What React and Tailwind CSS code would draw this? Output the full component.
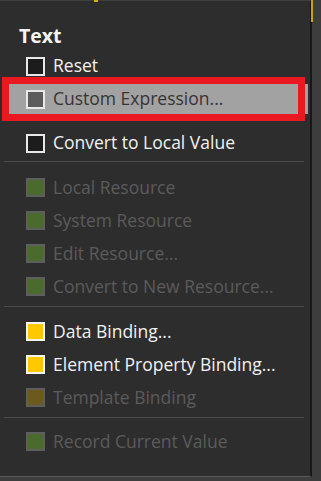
import React from "react"

const font = { fontFamily: '"Open Sans", "Noto Sans", "Liberation Sans", sans-serif' }

function Box({ kind }) {
  const cls =
    kind === "empty"
      ? "bg-[#1c1c1c] border-[#e8e8e8]"
      : kind === "gray"
      ? "bg-[#5c5c5c] border-[#e8e8e8]"
      : kind === "yellow"
      ? "bg-[#ffc800] border-[#f4f4f4]"
      : kind === "olive"
      ? "bg-[#6b5a1c] border-[#5e5e5e]"
      : "bg-[#4a6a2e] border-[#5e5e5e]"
  return <span className={`w-[19px] h-[19px] border-2 shrink-0 ${cls}`} />
}

function Row({ kind, label, disabled }) {
  return (
    <div className="h-[33px] flex items-center pl-[26px] gap-[8px]">
      <Box kind={kind} />
      <span
        className={`text-[17.5px] leading-none whitespace-nowrap ${
          disabled ? "text-[#5b5b5b]" : "text-[#f2f2f2]"
        }`}
      >
        {label}
      </span>
    </div>
  )
}

function Sep() {
  return <div className="h-px bg-[#4a4a4a] ml-[4px] w-[300px]" />
}

export default function App() {
  return (
    <div className="w-[321px] h-[481px] bg-[#3d3d3d] flex relative overflow-hidden" style={font}>
      <div className="w-[312px] h-[477px] bg-[#2d2d2d] border-t border-t-[#3e3e3e] border-r-2 border-r-[#181818] border-b border-b-[#5a5a5a] flex flex-col">
        <div className="h-[54px] pt-[24px] pl-[19px]">
          <span className="text-[19.5px] font-bold text-[#f4f4f4] leading-[22px]">Text</span>
        </div>
        <div className="h-[22px] flex items-center pl-[26px] gap-[8px]">
          <Box kind="empty" />
          <span className="text-[17.5px] leading-none text-[#f2f2f2]">Reset</span>
        </div>
        <div className="flex">
          <div className="ml-[2px] w-[303px] h-[44px] border-[7px] border-[#ea1820] bg-[#a2a2a2] flex items-center pl-[17px] gap-[8px]">
            <Box kind="gray" />
            <span className="text-[17.5px] leading-none text-[#353535] whitespace-nowrap">Custom Expression...</span>
          </div>
          <div className="w-[3px] h-[30px] mt-[7px] bg-[#a2a2a2]" />
        </div>
        <div className="h-[40px] pt-[4px] flex items-center pl-[26px] gap-[8px]">
          <Box kind="empty" />
          <span className="text-[17.5px] leading-none text-[#f2f2f2] whitespace-nowrap">Convert to Local Value</span>
        </div>
        <Sep />
        <div className="pt-[9px]">
          <Row kind="green" label="Local Resource" disabled />
          <Row kind="green" label="System Resource" disabled />
          <Row kind="green" label="Edit Resource..." disabled />
          <Row kind="green" label="Convert to New Resource..." disabled />
        </div>
        <div className="pt-[3px]">
          <Sep />
        </div>
        <div className="pt-[8px]">
          <Row kind="yellow" label="Data Binding..." />
          <Row kind="yellow" label="Element Property Binding..." />
          <Row kind="olive" label="Template Binding" disabled />
        </div>
        <div className="pt-[3px]">
          <Sep />
        </div>
        <div className="pt-[7px]">
          <Row kind="green" label="Record Current Value" disabled />
        </div>
      </div>
      <div className="absolute left-[311px] top-0 w-[2px] h-[22px] bg-[#c9a400]" />
      <div className="absolute left-[94px] top-0 w-[4px] h-[2px] bg-[#d4b000]" />
    </div>
  )
}
